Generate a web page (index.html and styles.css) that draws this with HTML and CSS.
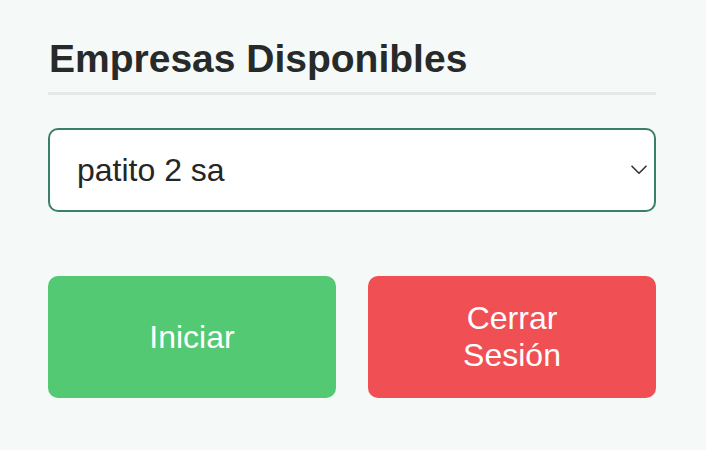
FILE: index.html
```html
<!DOCTYPE html>
<html lang="es">
<head>
<meta charset="utf-8">
<title>Empresas Disponibles</title>
<link rel="stylesheet" href="styles.css">
</head>
<body>
<main class="panel">
  <h1 class="title">Empresas Disponibles</h1>
  <div class="select-wrap">
    <select class="company-select">
      <option>patito 2 sa</option>
    </select>
    <svg class="chevron" width="16" height="10" viewBox="0 0 16 10" aria-hidden="true">
      <path d="M1 1.2 L8 8.2 L15 1.2" fill="none" stroke="#333" stroke-width="1.6" stroke-linecap="round" stroke-linejoin="round"/>
    </svg>
  </div>
  <div class="actions">
    <button class="btn btn-start">Iniciar</button>
    <button class="btn btn-logout">Cerrar Sesión</button>
  </div>
</main>
</body>
</html>
```
FILE: styles.css
```css
html, body {
  margin: 0;
  padding: 0;
}
body {
  background: #f5f9f7;
  font-family: "Liberation Sans", Arial, sans-serif;
  width: 706px;
  height: 450px;
  overflow: hidden;
}
.panel {
  padding: 37px 50px 0 48px;
}
.title {
  margin: 0 0 33px 0;
  font-size: 39px;
  font-weight: bold;
  line-height: normal;
  color: #272a29;
  padding: 0 0 11px 1px;
  border-bottom: 3px solid #e6e9e8;
}
.select-wrap {
  position: relative;
}
.company-select {
  display: block;
  width: 100%;
  height: 84px;
  box-sizing: border-box;
  -webkit-appearance: none;
  appearance: none;
  border: 2px solid #3b7f67;
  border-radius: 10px;
  background: #ffffff;
  font-family: "Liberation Sans", Arial, sans-serif;
  font-size: 32px;
  color: #262626;
  padding: 0 50px 0 27px;
  margin: 0;
  outline: none;
}
.chevron {
  position: absolute;
  right: 9px;
  top: 37px;
}
.actions {
  display: flex;
  gap: 32px;
  margin-top: 64px;
}
.btn {
  flex: 1 1 0;
  border: none;
  border-radius: 10px;
  padding: 24px 46px;
  font-family: "Liberation Sans", Arial, sans-serif;
  font-size: 32px;
  line-height: normal;
  color: #ffffff;
  cursor: pointer;
}
.btn-start {
  background: #53c973;
}
.btn-logout {
  background: #f04f54;
}
```
